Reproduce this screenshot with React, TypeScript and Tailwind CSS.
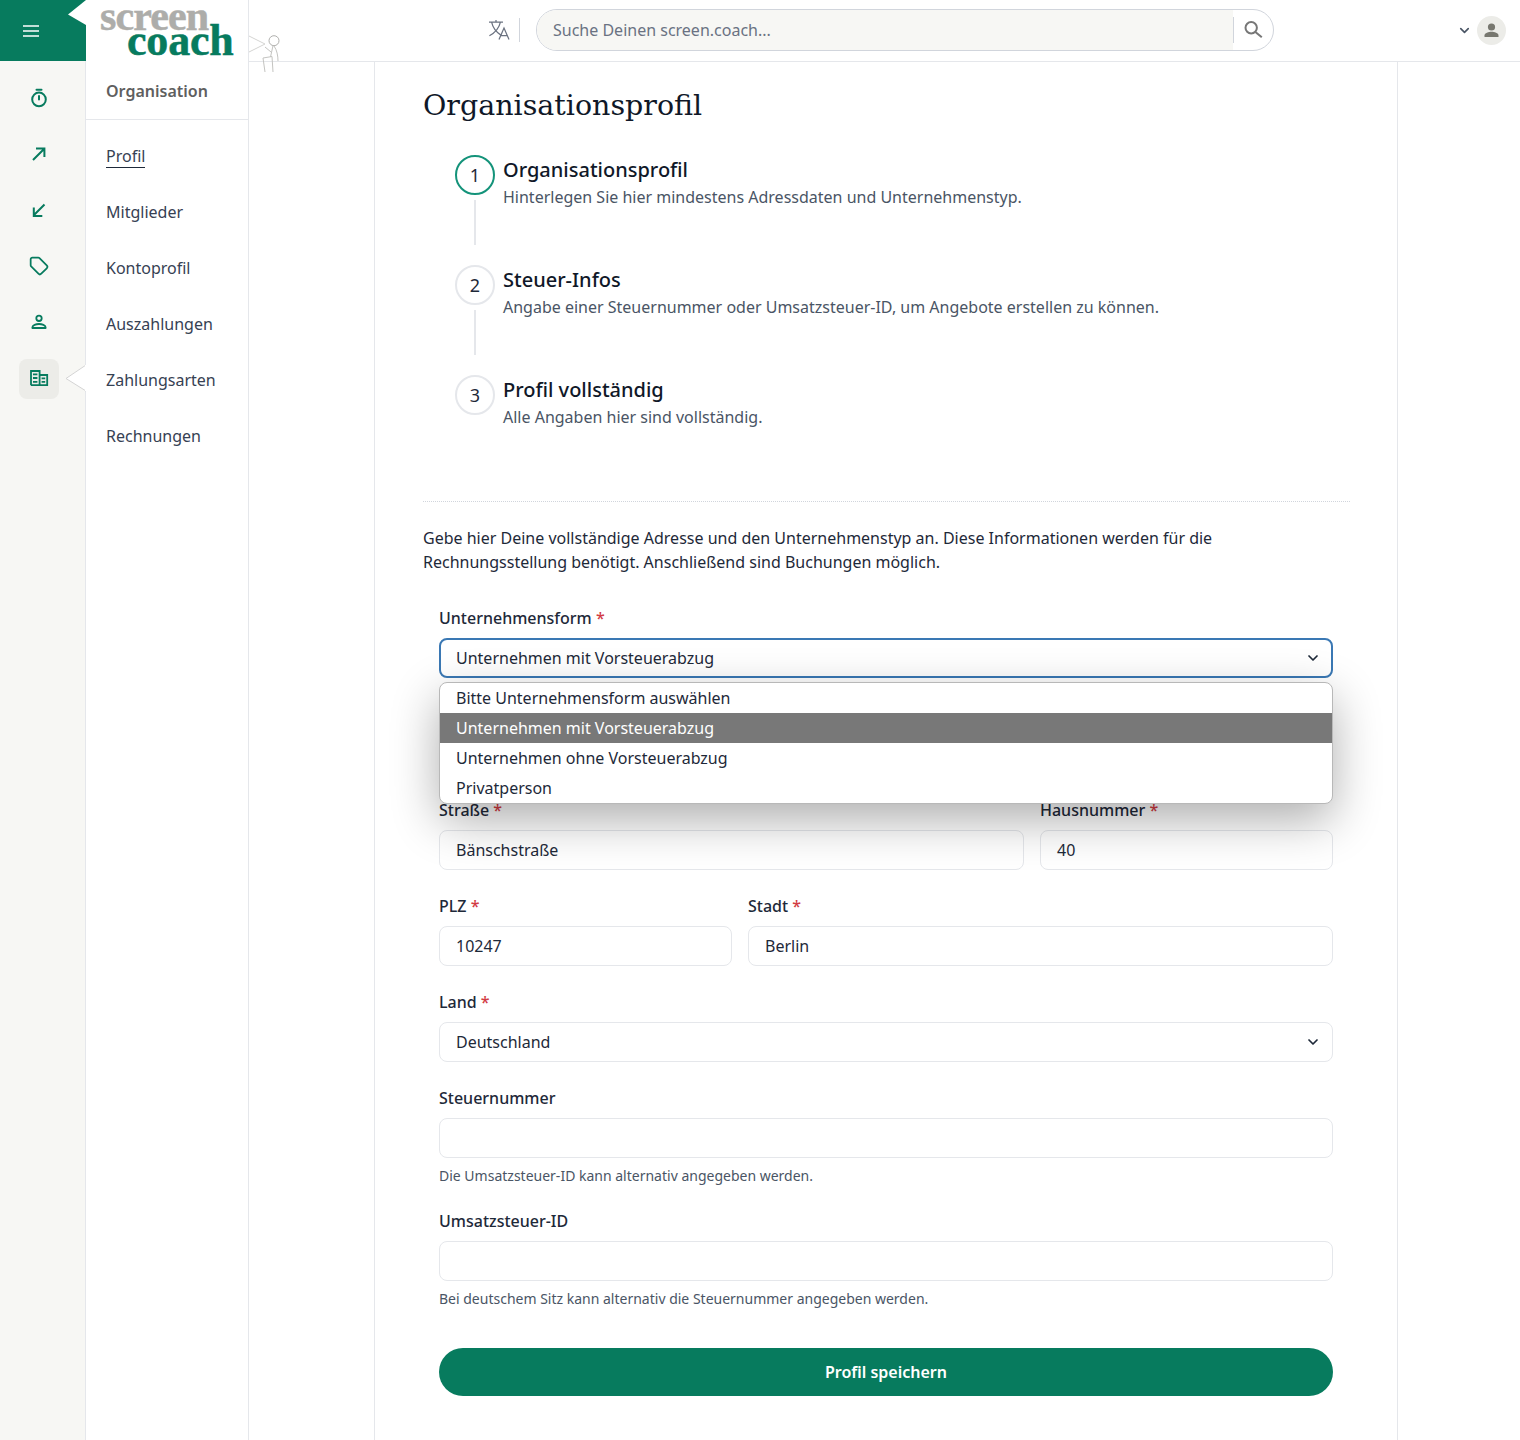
import { ChevronDown } from 'lucide-react';
import type { ReactNode } from 'react';

const navItems = ['Profil', 'Mitglieder', 'Kontoprofil', 'Auszahlungen', 'Zahlungsarten', 'Rechnungen'];

const steps = [
  { title: 'Organisationsprofil', text: 'Hinterlegen Sie hier mindestens Adressdaten und Unternehmenstyp.', active: true },
  { title: 'Steuer-Infos', text: 'Angabe einer Steuernummer oder Umsatzsteuer-ID, um Angebote erstellen zu können.' },
  { title: 'Profil vollständig', text: 'Alle Angaben hier sind vollständig.' },
];

const options = ['Bitte Unternehmensform auswählen', 'Unternehmen mit Vorsteuerabzug', 'Unternehmen ohne Vorsteuerabzug', 'Privatperson'];

function TimerIcon() {
  return (
    <svg width="20" height="20" viewBox="0 0 20 20" fill="none" stroke="currentColor" strokeWidth="2" strokeLinecap="round">
      <circle cx="10" cy="11.4" r="6.8" />
      <path d="M7.5 1.8h5M10 8v3.6" />
    </svg>
  );
}

function ArrowIcon({ down }: { down?: boolean }) {
  return (
    <svg width="20" height="20" viewBox="0 0 20 20" fill="none" stroke="currentColor" strokeWidth="2">
      <path d={down ? 'M15.5 4.5 5 15M4.8 7.5V16h8.5' : 'M4 16 15 5M7 4.6h8.4V13'} />
    </svg>
  );
}

function TagIcon() {
  return (
    <svg width="20" height="20" viewBox="0 0 24 24" fill="none" stroke="currentColor" strokeWidth="2.1" strokeLinejoin="round">
      <path d="M12.586 2.586A2 2 0 0 0 11.172 2H4a2 2 0 0 0-2 2v7.172a2 2 0 0 0 .586 1.414l8.704 8.704a2.426 2.426 0 0 0 3.42 0l6.58-6.58a2.426 2.426 0 0 0 0-3.42z" />
    </svg>
  );
}

function PersonIcon() {
  return (
    <svg width="20" height="20" viewBox="0 0 20 20" fill="none" stroke="currentColor" strokeWidth="1.8">
      <circle cx="10" cy="6.3" r="2.7" />
      <path d="M3.4 16v-.8c0-2 3.6-3.2 6.6-3.2s6.6 1.2 6.6 3.2v.8z" strokeLinejoin="round" />
    </svg>
  );
}

function BuildingIcon() {
  return (
    <svg width="20" height="20" viewBox="0 0 20 20" fill="none" stroke="currentColor" strokeWidth="1.8">
      <path d="M2 17.2V3h8.6v14.2M10.6 7h7.6v10.2H2" />
      <path d="M4 6.4h4.4M4 10h4.4M4 13.8h4.4M12.6 10.4h3.6M12.6 13.8h3.6" />
    </svg>
  );
}

function TranslateIcon() {
  return (
    <svg width="22" height="20" viewBox="0 0 22 20" fill="none" stroke="#6b7280" strokeWidth="1.25">
      <path d="M1 2.2h14M8 0v2.2M3.6 2.2c1.2 5.6 5.2 10.4 9.6 13.2M12.4 2.2c-1.2 5.6-5.4 10.6-11 13.6" />
      <path d="M11 19.5l5-11.5 5 11.5M12.6 15.6h6.8" />
    </svg>
  );
}

function SearchIcon() {
  return (
    <svg width="20" height="20" viewBox="0 0 20 20" fill="none" stroke="#777" strokeWidth="2">
      <circle cx="7.2" cy="7.7" r="5.7" />
      <path d="m11.4 11.9 6.4 5.4" />
    </svg>
  );
}

function Field({ label, required, children, hint }: { label: string; required?: boolean; children: ReactNode; hint?: string }) {
  return (
    <div className="flex min-w-0 flex-col">
      <div className="mb-2 h-6 text-[16px] font-medium leading-6 text-gray-800">
        {label} {required && <span className="text-[#d23c44]">*</span>}
      </div>
      {children}
      {hint && <p className="mt-[7px] text-[14px] leading-[21px] text-gray-600">{hint}</p>}
    </div>
  );
}

function TextBox({ value }: { value?: string }) {
  return (
    <div className="flex h-10 items-center rounded-lg border border-gray-200 px-4 text-[16px] text-gray-800">{value}</div>
  );
}

function Logo() {
  return (
    <div className="flex h-[62px] w-full flex-col pt-[4px] font-['Liberation_Serif',serif] font-bold">
      <span className="ml-[14px] h-[23px] text-[42px] leading-6 tracking-[-0.9px] text-[#adadaa] [-webkit-text-stroke:0.5px_#adadaa]">screen</span>
      <span className="ml-[41px] h-7 text-[44px] leading-7 tracking-[-0.2px] text-[#077b5e] [-webkit-text-stroke:0.5px_#077b5e]">coach</span>
    </div>
  );
}

export default function App() {
  return (
    <div className="relative flex h-[1440px] w-[1520px] overflow-hidden bg-white font-['Noto_Sans',sans-serif]">
      <aside className="relative flex w-[86px] shrink-0 flex-col border-r border-gray-200 bg-[#f7f7f4]">
        <div className="relative mr-[-1px] flex h-[61px] items-center bg-[#077b5e] pl-[23px] text-white">
          <svg width="16" height="12" viewBox="0 0 16 12" stroke="currentColor" strokeWidth="1.7">
            <path d="M0 1h16M0 6h16M0 11h16" />
          </svg>
          <svg className="absolute right-0 top-0" width="18" height="26" viewBox="0 0 18 26">
            <path d="M18 0 0 14.5 18 25z" fill="#fff" />
          </svg>
        </div>
        <div className="flex flex-col pt-[10px] text-[#077b5e]">
          {[<TimerIcon />, <ArrowIcon />, <ArrowIcon down />, <TagIcon />, <PersonIcon />, <BuildingIcon />].map((icon, index) => (
            <div key={index} className="flex h-14 items-center justify-center">
              <div className={index === 5 ? 'ml-[-7px] flex size-10 items-center justify-center rounded-lg bg-[#ecece8]' : 'ml-[-7px] flex size-10 items-center justify-center'}>
                <span className="-translate-y-px">{icon}</span>
              </div>
            </div>
          ))}
        </div>
        <svg className="absolute left-[65px] top-[365px]" width="22" height="27" viewBox="0 0 22 27">
          <path d="M21 0 1 13.5 21 26" fill="#fff" stroke="#d4d4d4" />
          <path d="M21 0v26" stroke="#fff" strokeWidth="2" />
        </svg>
      </aside>

      <nav className="flex w-[163px] shrink-0 flex-col border-r border-gray-200 bg-white">
        <Logo />
        <div className="flex h-[58px] items-center border-b border-gray-200 pl-5 text-[16px] font-semibold text-[#5f5f5f]">Organisation</div>
        <ul className="flex flex-col pt-[8px] text-[16px] text-gray-700">
          {navItems.map((item, index) => (
            <li key={item} className="flex h-14 items-center pl-5">
              <span className={index === 0 ? 'border-b border-gray-800 leading-[22px]' : 'leading-[22px]'}>{item}</span>
            </li>
          ))}
        </ul>
      </nav>

      <div className="flex min-w-0 flex-1 flex-col">
        <header className="relative flex h-[62px] shrink-0 items-center border-b border-gray-200 bg-white pb-px">
          <svg className="absolute left-0 top-[32px]" width="36" height="42" viewBox="0 0 36 42" fill="none" stroke="#c4c4c1" strokeWidth="1">
            <path d="M0 4 16 12 0 20" stroke="#d4d4d2" />
            <circle cx="25" cy="8.7" r="5" stroke="#b0b0ad" />
            <path d="M24 13.7 21.5 25M25 14c3 4 4 10 4 15M16 15l6 5M14 26l9-1.5M14 26l2 14M23 24.5l1 15.5" />
          </svg>
          <div className="ml-[239px]">
            <TranslateIcon />
          </div>
          <div className="ml-[9px] h-[24px] w-px bg-gray-300" />
          <div className="ml-4 flex h-[42px] w-[738px] items-center overflow-hidden rounded-full border border-gray-300 bg-white">
            <div className="flex h-full flex-1 items-center bg-[#f7f7f4] pl-4 text-[16px] text-gray-500">Suche Deinen screen.coach...</div>
            <div className="h-[26px] w-px bg-gray-300" />
            <div className="flex w-[39px] items-center justify-center">
              <SearchIcon />
            </div>
          </div>
          <ChevronDown size={15} strokeWidth={2.6} className="ml-[183px] text-gray-600" />
          <div className="ml-[5px] flex size-[29px] items-center justify-center rounded-full bg-[#ecece8]">
            <svg width="17" height="17" viewBox="0 0 17 17" fill="#77776f">
              <circle cx="8.5" cy="5" r="3.6" />
              <path d="M1.5 15v-1.6c0-2.4 4.2-3.6 7-3.6s7 1.2 7 3.6V15z" />
            </svg>
          </div>
        </header>

        <main className="ml-[125px] flex w-[1024px] flex-1 flex-col border-x border-gray-200 bg-white pl-12 pr-[47px]">
          <h1 className="mt-[26px] h-9 font-['DejaVu_Serif',serif] text-[28.5px] leading-9 text-gray-900">Organisationsprofil</h1>

          <ol className="ml-8 mt-[31px] flex flex-col">
            {steps.map((step, index) => (
              <li key={step.title} className="flex h-[110px] gap-2">
                <div className="flex w-10 flex-col items-center">
                  <div className={step.active ? 'flex size-10 items-center justify-center rounded-full border-2 border-[#14937a] text-[18px] text-gray-800' : 'flex size-10 items-center justify-center rounded-full border-2 border-gray-200 text-[18px] text-gray-800'}>{index + 1}</div>
                  {index < 2 && <div className="mt-[5px] h-[45px] w-0.5 bg-gray-200" />}
                </div>
                <div>
                  <div className="text-[20px] font-medium leading-[30px] text-gray-900">{step.title}</div>
                  <div className="text-[16px] leading-6 text-gray-600">{step.text}</div>
                </div>
              </li>
            ))}
          </ol>

          <div className="mt-4 border-t border-dotted border-gray-300" />

          <p className="mt-6 w-[830px] text-[16px] leading-6 text-gray-800">
            Gebe hier Deine vollständige Adresse und den Unternehmenstyp an. Diese Informationen werden für die Rechnungsstellung benötigt. Anschließend sind Buchungen möglich.
          </p>

          <div className="ml-4 mr-[17px] mt-[32px] flex flex-col">
            <div className="relative mb-[120px]">
              <Field label="Unternehmensform" required>
                <div className="flex h-10 items-center justify-between rounded-lg border-2 border-[#3a78b4] pl-[15px] pr-[10px] text-[16px] text-gray-800">
                  Unternehmen mit Vorsteuerabzug
                  <ChevronDown size={16} strokeWidth={2.6} className="text-gray-800" />
                </div>
              </Field>
              <ul className="absolute left-0 right-0 top-[76px] z-10 overflow-hidden rounded-lg border border-[#b8b8b8] bg-white text-[16px] shadow-[0_16px_48px_rgba(0,0,0,0.32)]">
                {options.map((option, index) => (
                  <li key={option} className={index === 1 ? 'flex h-[30px] items-center bg-[#787878] pl-4 text-white' : 'flex h-[30px] items-center pl-4 text-gray-800'}>{option}</li>
                ))}
              </ul>
            </div>

            <div className="mb-6 grid grid-cols-[585px_293px] gap-4">
              <Field label="Straße" required><TextBox value="Bänschstraße" /></Field>
              <Field label="Hausnummer" required><TextBox value="40" /></Field>
            </div>
            <div className="mb-6 grid grid-cols-[293px_585px] gap-4">
              <Field label="PLZ" required><TextBox value="10247" /></Field>
              <Field label="Stadt" required><TextBox value="Berlin" /></Field>
            </div>
            <div className="mb-6">
              <Field label="Land" required>
                <div className="flex h-10 items-center justify-between rounded-lg border border-gray-200 pl-4 pr-[11px] text-[16px] text-gray-800">
                  Deutschland
                  <ChevronDown size={16} strokeWidth={2.6} className="text-gray-800" />
                </div>
              </Field>
            </div>
            <div className="mb-[23px]">
              <Field label="Steuernummer" hint="Die Umsatzsteuer-ID kann alternativ angegeben werden."><TextBox /></Field>
            </div>
            <div className="mb-[39px]">
              <Field label="Umsatzsteuer-ID" hint="Bei deutschem Sitz kann alternativ die Steuernummer angegeben werden."><TextBox /></Field>
            </div>
            <button className="h-12 rounded-full bg-[#077b5e] pb-px text-[16px] font-semibold text-white">Profil speichern</button>
          </div>
        </main>
      </div>
    </div>
  );
}
